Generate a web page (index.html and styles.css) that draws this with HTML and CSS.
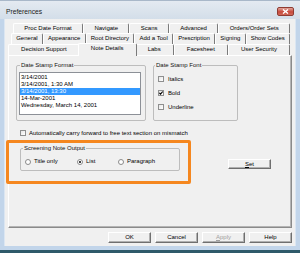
FILE: index.html
```html
<!DOCTYPE html>
<html lang="en">
<head>
    <meta charset="UTF-8">
    <title>Preferences</title>
    <link rel="stylesheet" href="styles.css">
</head>
<body>
<div class="window">
    <div class="titlebar">
        <span class="title">Preferences</span>
        <span class="close">
            <svg width="7" height="5" viewBox="0 0 7 5"><path d="M1 0.5 L6 4.5 M6 0.5 L1 4.5" stroke="#fff" stroke-width="1.4"/></svg>
        </span>
    </div>

    <div class="client">
        <div class="tabs">
            <div class="tab-row row1">
                <div class="tab">Proc Date Format</div>
                <div class="tab">Navigate</div>
                <div class="tab">Scans</div>
                <div class="tab">Advanced</div>
                <div class="tab">Orders/Order Sets</div>
            </div>
            <div class="tab-row row2">
                <div class="tab">General</div>
                <div class="tab">Appearance</div>
                <div class="tab">Root Directory</div>
                <div class="tab">Add a Tool</div>
                <div class="tab">Prescription</div>
                <div class="tab">Signing</div>
                <div class="tab">Show Codes</div>
            </div>
            <div class="tab-row row3">
                <div class="tab">Decision Support</div>
                <div class="tab active">Note Details</div>
                <div class="tab">Labs</div>
                <div class="tab">Facesheet</div>
                <div class="tab">User Security</div>
            </div>
        </div>

        <div class="panel">
            <div class="top-groups">
                <fieldset class="group fmt">
                    <legend>Date Stamp Format</legend>
                    <div class="group-body">
                        <div class="listbox">
                            <div class="item">3/14/2001</div>
                            <div class="item">3/14/2001, 1:30 AM</div>
                            <div class="item selected">3/14/2001, 13:30</div>
                            <div class="item">14-Mar-2001</div>
                            <div class="item">Wednesday, March 14, 2001</div>
                        </div>
                    </div>
                </fieldset>
                <fieldset class="group font">
                    <legend>Date Stamp Font</legend>
                    <div class="group-body">
                        <div class="check-row"><span class="box"></span>Italics</div>
                        <div class="check-row"><span class="box checked"><svg width="4" height="4" viewBox="0 0 4 4"><path d="M0.3 1.8 L1.5 3.2 L3.7 0.5" stroke="#000" stroke-width="1.1" fill="none"/></svg></span>Bold</div>
                        <div class="check-row"><span class="box"></span>Underline</div>
                    </div>
                </fieldset>
            </div>

            <div class="check-line"><span class="box"></span>Automatically carry forward to free text section on mismatch</div>

            <div class="output-row">
                <div class="highlight">
                    <fieldset class="group output">
                        <legend>Screening Note Output</legend>
                        <div class="group-body radios">
                            <div class="radio-opt opt-title"><span class="radio"></span>Title only</div>
                            <div class="radio-opt opt-list"><span class="radio on"></span>List</div>
                            <div class="radio-opt"><span class="radio"></span>Paragraph</div>
                        </div>
                    </fieldset>
                </div>
                <div class="btn set"><u>S</u>et</div>
            </div>
        </div>

        <div class="buttons">
            <div class="btn">OK</div>
            <div class="btn">Cancel</div>
            <div class="btn disabled"><u>A</u>pply</div>
            <div class="btn">Help</div>
        </div>
    </div>

    <div class="frame-bottom"></div>
</div>
</body>
</html>
```

FILE: styles.css
```css
body {
    margin: 0;
    width: 300px;
    height: 253px;
    overflow: hidden;
    font-family: "Liberation Sans", Arial, sans-serif;
    font-size: 6px;
    color: #000;
}

.window {
    height: 253px;
    display: flex;
    flex-direction: column;
    background: #c2d5ea;
}

.titlebar {
    height: 19px;
    box-sizing: border-box;
    display: flex;
    align-items: flex-start;
    justify-content: space-between;
    padding: 7px 6px 0 6px;
    background: linear-gradient(#e4eaf1, #d3dee9);
    border-top: 1px solid #a9b8c9;
}

.title {
    font-size: 6.7px;
    line-height: 8px;
    color: #1b1b1b;
}

.close {
    width: 17px;
    height: 9px;
    box-sizing: border-box;
    margin-top: -1px;
    border: 1px solid #8f3b32;
    border-radius: 2px;
    background: linear-gradient(#e0a69c, #c8493c 55%, #d06a5b);
    display: flex;
    align-items: center;
    justify-content: center;
}

.client {
    flex: 1;
    margin: 0 5px;
    padding-top: 4px;
    background: #f0f0f0;
    display: flex;
    flex-direction: column;
    box-shadow: -1px 0 #dbe6f2, 1px 0 #dbe6f2;
}

.frame-bottom {
    height: 7px;
    background: linear-gradient(#c2d5ea 55%, #2f5a6a 55%);
}

/* tabs */
.tab-row {
    display: flex;
    height: 11px;
}

.row1 { height: 10px; margin: 0 5px 0 8px; }
.row2 { margin: 0 5px 0 6px; }
.row3 { margin: 0 5px 0 3px; }

.tab {
    flex: 1 1 auto;
    box-sizing: border-box;
    text-align: center;
    white-space: nowrap;
    line-height: 9px;
    border-top: 1px solid #fff;
    border-left: 1px solid #fff;
    border-right: 1px solid #7b7b7b;
    border-radius: 2px 2px 0 0;
    background: #f0f0f0;
}

.tab.active {
    position: relative;
    z-index: 1;
    height: 13px;
    margin: -1px -2px 0 -2px;
    line-height: 9px;
}

/* panel */
.panel {
    height: 173px;
    box-sizing: border-box;
    margin: 0 3px;
    padding: 6px 0 0 7px;
    border-top: 1px solid #fff;
    border-left: 1px solid #fff;
    border-right: 1px solid #8a8a8a;
    border-bottom: 1px solid #8a8a8a;
    box-shadow: inset -1px -1px #b4b4b4;
}

.top-groups {
    display: flex;
    gap: 7px;
}

.group {
    margin: 0;
    padding: 0;
    border: 1px solid #bdbdbd;
    border-radius: 2px;
    min-width: 0;
}

.group legend {
    padding: 0 1px;
    line-height: 7px;
    color: #111;
}

.fmt { width: 130px; box-sizing: border-box; }
.fmt legend { margin-left: 3px; }
.fmt .group-body { padding: 3px 4px 5px 2px; }

.font { width: 85px; box-sizing: border-box; }
.font legend { margin-left: 1px; }
.font .group-body { padding: 3px 4px 0 4px; }

.listbox {
    height: 43px;
    box-sizing: border-box;
    border: 1px solid #8c9097;
    background: #fff;
    padding-top: 1px;
}

.item {
    line-height: 7px;
    padding-left: 1px;
    white-space: nowrap;
}

.item.selected {
    background: #3399ff;
    color: #fff;
}

.check-row {
    display: flex;
    align-items: center;
    height: 14px;
}

.box {
    width: 6px;
    height: 6px;
    box-sizing: border-box;
    border: 1px solid #8e8f8f;
    background: linear-gradient(135deg, #e6e6e6, #fff);
    margin-right: 4px;
    display: flex;
    align-items: center;
    justify-content: center;
    flex: none;
}

.check-line {
    display: flex;
    align-items: center;
    height: 7px;
    margin: 8px 0 0 4px;
    white-space: nowrap;
}

.check-line .box { margin-right: 3px; }

/* screening output */
.output-row {
    display: flex;
    align-items: flex-start;
    margin: 4px 0 0 -10px;
}

.highlight {
    width: 185px;
    box-sizing: border-box;
    border: 3px solid #f5871f;
    border-radius: 2px;
    padding: 2px 9px 10px 11px;
}

.output { width: 160px; box-sizing: border-box; }
.output legend { margin-left: 2px; }

.radios {
    display: flex;
    align-items: center;
    padding: 6px 4px 5px 4px;
    line-height: 7px;
}

.radio-opt {
    display: flex;
    align-items: center;
    white-space: nowrap;
}

.opt-title { width: 52px; }
.opt-list { width: 41px; }

.radio {
    width: 6px;
    height: 6px;
    box-sizing: border-box;
    border: 1px solid #8b8b8b;
    border-radius: 50%;
    background: #fff;
    margin-right: 3px;
    display: flex;
    align-items: center;
    justify-content: center;
}

.radio.on::after {
    content: "";
    width: 2px;
    height: 2px;
    border-radius: 50%;
    background: #000;
}

/* buttons */
.btn {
    width: 43px;
    height: 11px;
    box-sizing: border-box;
    text-align: center;
    line-height: 9px;
    border: 1px solid;
    border-color: #fff #6f6f6f #6f6f6f #fff;
    box-shadow: inset -1px -1px #b0b0b0;
    background: #f0f0f0;
}

.btn.set {
    height: 10px;
    line-height: 8px;
    margin: 19px 0 0 37px;
}

.btn.disabled { color: #a0a0a0; }

.buttons {
    display: flex;
    justify-content: flex-end;
    gap: 4px;
    margin: 4px 3px 0 0;
}
```
